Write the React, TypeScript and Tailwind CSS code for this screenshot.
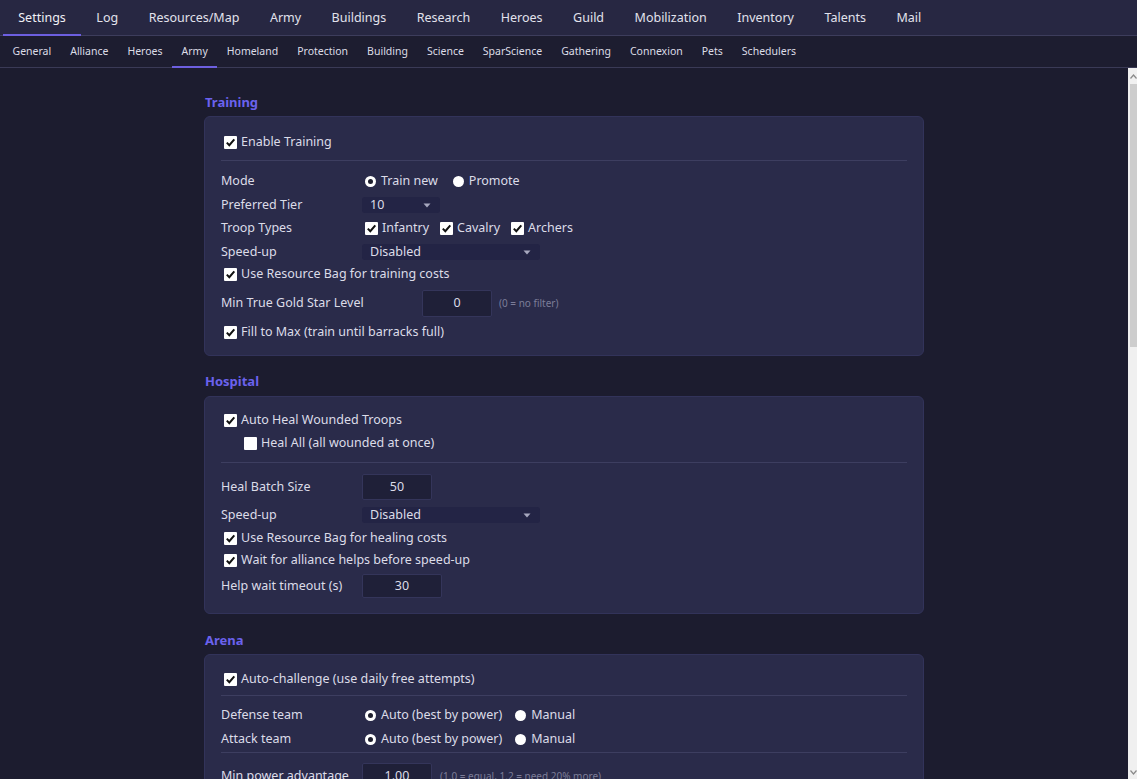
import React from "react";

const FONT = { fontFamily: '"Noto Sans", "Open Sans", sans-serif' };

const mainTabs = [
  "Settings",
  "Log",
  "Resources/Map",
  "Army",
  "Buildings",
  "Research",
  "Heroes",
  "Guild",
  "Mobilization",
  "Inventory",
  "Talents",
  "Mail",
];

const subTabs = [
  "General",
  "Alliance",
  "Heroes",
  "Army",
  "Homeland",
  "Protection",
  "Building",
  "Science",
  "SparScience",
  "Gathering",
  "Connexion",
  "Pets",
  "Schedulers",
];

function CheckBox({ checked }: { checked: boolean }) {
  return (
    <span className="w-[13px] h-[13px] ml-[3px] mr-[4px] shrink-0 bg-white rounded-[1px] flex items-center justify-center">
      {checked && (
        <svg width="11" height="11" viewBox="0 0 11 11">
          <path d="M1.8 5.6 L4.3 8.2 L9.3 2.3" fill="none" stroke="#111" strokeWidth="2" />
        </svg>
      )}
    </span>
  );
}

function Radio({ checked }: { checked: boolean }) {
  return (
    <span className="w-[11px] h-[11px] ml-[3px] mr-[5px] shrink-0 rounded-full bg-white flex items-center justify-center">
      {checked && <span className="w-[5px] h-[5px] rounded-full bg-[#1e1f2e]" />}
    </span>
  );
}

function CheckLabel({ checked, children }: { checked: boolean; children: React.ReactNode }) {
  return (
    <label className="flex items-center">
      <CheckBox checked={checked} />
      <span>{children}</span>
    </label>
  );
}

function Caret() {
  return (
    <svg width="8" height="5" viewBox="0 0 8 5">
      <path d="M0.5 0.5 L7.5 0.5 L4 4.5 Z" fill="#a7a8bf" />
    </svg>
  );
}

function Select({ value, width }: { value: string; width: string }) {
  return (
    <div
      className={`${width} h-[16px] bg-[#232445] rounded-[3px] pl-[8px] pr-[9px] flex items-center justify-between`}
    >
      <span>{value}</span>
      <Caret />
    </div>
  );
}

function NumBox({ value, width, height }: { value: string; width: string; height: string }) {
  return (
    <div
      className={`${width} ${height} bg-[#1f2038] border border-[#34355a] rounded-[2px] flex items-center justify-center`}
    >
      {value}
    </div>
  );
}

function Row({ h, label, children }: { h: string; label: string; children: React.ReactNode }) {
  return (
    <div className={`${h} flex items-center`}>
      <span className="w-[141px] shrink-0">{label}</span>
      {children}
    </div>
  );
}

function Sep({ className }: { className: string }) {
  return <div className={`h-px bg-[#3d3e60] ${className}`} />;
}

function Section({ title, children, top }: { title: string; children: React.ReactNode; top: string }) {
  return (
    <section className={top}>
      <h2 className="text-[13px] font-bold text-[#6b62ee] leading-[16px] pl-px">{title}</h2>
      {children}
    </section>
  );
}

function TeamChoice() {
  return (
    <div className="flex items-center">
      <Radio checked />
      <span>Auto (best by power)</span>
      <span className="w-[10px]" />
      <Radio checked={false} />
      <span>Manual</span>
    </div>
  );
}

export default function App() {
  return (
    <div
      className="w-[1137px] h-[779px] overflow-hidden flex flex-col bg-[#1c1c2f] text-[#dcdce8] text-[12.5px]"
      style={FONT}
    >
      {/* primary navigation */}
      <nav className="h-[36px] shrink-0 bg-[#272742] border-b border-[#3d3d5c] flex items-stretch pl-[3px] text-[12.5px] text-[#e2e2ec]">
        {mainTabs.map((t, i) => (
          <div
            key={t}
            className={`relative px-[15.25px] pt-[1px] flex items-center ${i === 0 ? "text-[#f0f0f6]" : ""}`}
          >
            {t}
            {i === 0 && <span className="absolute left-0 right-0 bottom-[-1px] h-[2px] bg-[#6d5fe0]" />}
          </div>
        ))}
      </nav>

      {/* secondary navigation */}
      <nav className="h-[32px] shrink-0 bg-[#1d1d30] border-b border-[#3a3a56] flex items-stretch pl-[3px] text-[10.5px] text-[#dcdce6]">
        {subTabs.map((t, i) => (
          <div key={t} className="relative px-[9.5px] flex items-center">
            {t}
            {i === 3 && <span className="absolute left-0 right-0 bottom-[-1px] h-[2px] bg-[#6d5fe0]" />}
          </div>
        ))}
      </nav>

      <div className="flex-1 flex min-h-0">
        <main className="flex-1 overflow-hidden">
          <div className="w-[720px] mx-auto pt-[26px]">
            <Section title="Training" top="">
              <div className="mt-[6px] bg-[#2a2b4a] border border-[#32335a] rounded-[6px] pl-[16px] pr-[16px] pt-[16px] pb-[13px]">
                <div className="h-[18px] flex items-center">
                  <CheckLabel checked>Enable Training</CheckLabel>
                </div>
                <Sep className="mt-[9px]" />
                <div className="h-[8px]" />
                <Row h="h-[24px]" label="Mode">
                  <div className="flex items-center">
                    <Radio checked />
                    <span>Train new</span>
                    <span className="w-[12px]" />
                    <Radio checked={false} />
                    <span>Promote</span>
                  </div>
                </Row>
                <Row h="h-[24px]" label="Preferred Tier">
                  <Select value="10" width="w-[78px]" />
                </Row>
                <Row h="h-[23px]" label="Troop Types">
                  <div className="flex items-center">
                    <CheckLabel checked>Infantry</CheckLabel>
                    <span className="w-[8px]" />
                    <CheckLabel checked>Cavalry</CheckLabel>
                    <span className="w-[8px]" />
                    <CheckLabel checked>Archers</CheckLabel>
                  </div>
                </Row>
                <Row h="h-[24px]" label="Speed-up">
                  <Select value="Disabled" width="w-[178px]" />
                </Row>
                <div className="h-[20px] flex items-center">
                  <CheckLabel checked>Use Resource Bag for training costs</CheckLabel>
                </div>
                <div className="h-[38px] flex items-center">
                  <span className="w-[201px] shrink-0">Min True Gold Star Level</span>
                  <NumBox value="0" width="w-[70px]" height="h-[27px]" />
                  <span className="ml-[7px] text-[10px] text-[#7c7d98]">(0 = no filter)</span>
                </div>
                <div className="h-[20px] flex items-center">
                  <CheckLabel checked>Fill to Max (train until barracks full)</CheckLabel>
                </div>
              </div>
            </Section>

            <Section title="Hospital" top="mt-[17px]">
              <div className="mt-[7px] bg-[#2a2b4a] border border-[#32335a] rounded-[6px] pl-[16px] pr-[16px] pt-[12px] pb-[12px]">
                <div className="h-[23px] flex items-center">
                  <CheckLabel checked>Auto Heal Wounded Troops</CheckLabel>
                </div>
                <div className="h-[23px] flex items-center pl-[20px]">
                  <CheckLabel checked={false}>Heal All (all wounded at once)</CheckLabel>
                </div>
                <Sep className="mt-[7px]" />
                <div className="h-[11px]" />
                <Row h="h-[26px]" label="Heal Batch Size">
                  <NumBox value="50" width="w-[70px]" height="h-[26px]" />
                </Row>
                <div className="h-[3px]" />
                <Row h="h-[24px]" label="Speed-up">
                  <Select value="Disabled" width="w-[178px]" />
                </Row>
                <div className="h-[22px] flex items-center">
                  <CheckLabel checked>Use Resource Bag for healing costs</CheckLabel>
                </div>
                <div className="h-[22px] flex items-center">
                  <CheckLabel checked>Wait for alliance helps before speed-up</CheckLabel>
                </div>
                <Row h="h-[30px]" label="Help wait timeout (s)">
                  <NumBox value="30" width="w-[80px]" height="h-[24px]" />
                </Row>
              </div>
            </Section>

            <Section title="Arena" top="mt-[18px]">
              <div className="mt-[6px] bg-[#2a2b4a] border border-[#32335a] rounded-[6px] pl-[16px] pr-[16px] pt-[13px] pb-[12px]">
                <div className="h-[22px] flex items-center">
                  <CheckLabel checked>Auto-challenge (use daily free attempts)</CheckLabel>
                </div>
                <Sep className="mt-[5px]" />
                <div className="h-[7px]" />
                <Row h="h-[24px]" label="Defense team">
                  <TeamChoice />
                </Row>
                <Row h="h-[24px]" label="Attack team">
                  <TeamChoice />
                </Row>
                <Sep className="mt-[1px]" />
                <div className="h-[10px]" />
                <Row h="h-[26px]" label="Min power advantage">
                  <NumBox value="1.00" width="w-[70px]" height="h-[26px]" />
                  <span className="ml-[8px] text-[10px] text-[#7c7d98]">(1.0 = equal, 1.2 = need 20% more)</span>
                </Row>
              </div>
            </Section>
          </div>
        </main>

        {/* window scrollbar */}
        <div className="w-[9px] shrink-0 bg-[#f0f0f0] flex flex-col">
          <div className="h-[16px] flex items-center justify-start pl-[2px]">
            <svg width="7" height="5" viewBox="0 0 7 5">
              <path d="M0.5 4.5 L3.5 1 L6.5 4.5" fill="none" stroke="#8a8a8a" strokeWidth="1.2" />
            </svg>
          </div>
          <div className="h-[263px] ml-[2px] bg-[#cdcdcd]" />
          <div className="flex-1" />
          <div className="h-[14px] flex items-center justify-start pl-[2px]">
            <svg width="7" height="5" viewBox="0 0 7 5">
              <path d="M0.5 0.5 L3.5 4 L6.5 0.5" fill="none" stroke="#8a8a8a" strokeWidth="1.2" />
            </svg>
          </div>
        </div>
      </div>
    </div>
  );
}
